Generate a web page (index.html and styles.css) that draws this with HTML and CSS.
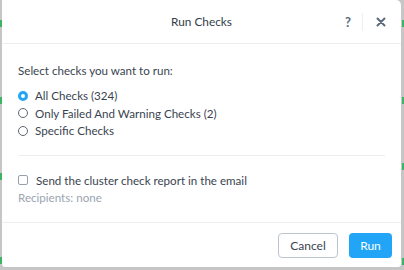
FILE: index.html
```html
<!DOCTYPE html>
<html lang="en">
<head>
    <meta charset="UTF-8">
    <title>Run Checks</title>
    <link rel="stylesheet" href="styles.css">
</head>
<body>
    <div class="modal">
        <div class="modal-header">
            <div class="modal-title">Run Checks</div>
            <div class="header-actions">
                <span class="help">?</span>
                <span class="sep"></span>
                <span class="close">
                    <svg width="10" height="10" viewBox="0 0 10 10"><path d="M1.5 1.5 L8.5 8.5 M8.5 1.5 L1.5 8.5" stroke="#5b6b7c" stroke-width="2" stroke-linecap="round"/></svg>
                </span>
            </div>
        </div>

        <div class="modal-body">
            <p class="intro">Select checks you want to run:</p>
            <div class="options">
                <label class="radio-row"><span class="radio checked"></span>All Checks (324)</label>
                <label class="radio-row"><span class="radio"></span>Only Failed And Warning Checks (2)</label>
                <label class="radio-row"><span class="radio"></span>Specific Checks</label>
            </div>
            <hr class="divider">
            <label class="check-row"><span class="checkbox"></span>Send the cluster check report in the email</label>
            <div class="recipients">Recipients: none</div>
        </div>

        <div class="modal-footer">
            <button class="btn btn-default">Cancel</button>
            <button class="btn btn-primary">Run</button>
        </div>
    </div>
</body>
</html>
```

FILE: styles.css
```css
:root {
    --text: #3a4450;
    --muted: #9aa4b0;
    --line: #eceff2;
    --blue: #22a5f7;
}

body {
    margin: 0;
    width: 404px;
    height: 270px;
    overflow: hidden;
    font-family: 'Lato', 'Open Sans', sans-serif;
    color: var(--text);
    background-color: #c6c6c6;
    background-image:
        linear-gradient(#3cb464, #3cb464),
        linear-gradient(#3cb464, #3cb464),
        linear-gradient(#3cb464, #3cb464),
        linear-gradient(#3cb464, #3cb464),
        linear-gradient(#3cb464, #3cb464),
        linear-gradient(#3cb464, #3cb464),
        linear-gradient(#3cb464, #3cb464),
        linear-gradient(#3cb464, #3cb464);
    background-size: 2px 7px;
    background-repeat: no-repeat;
    background-position:
        0 20px, 0 97px, 0 173px, 0 257px,
        402px 20px, 402px 97px, 402px 163px, 402px 258px;
}

.modal {
    margin: 0 3px 0 2px;
    width: 399px;
    height: 267px;
    background: white;
    border-radius: 0 5px 3px 3px;
    display: flex;
    flex-direction: column;
}

.modal-header {
    height: 44px;
    border-bottom: 1px solid var(--line);
    display: flex;
    align-items: center;
    justify-content: center;
    position: relative;
    box-sizing: border-box;
}

.modal-title {
    font-size: 11.8px;
    color: #333d48;
}

.header-actions {
    position: absolute;
    right: 0;
    top: 0;
    height: 44px;
    display: flex;
    align-items: center;
}

.help {
    font-weight: 700;
    font-size: 13px;
    color: #5b6b7c;
    width: 14px;
    text-align: center;
    margin-right: 7px;
}

.sep {
    width: 1px;
    height: 18px;
    background: var(--line);
}

.close {
    width: 36px;
    display: flex;
    justify-content: center;
    margin-right: 2px;
}

.modal-body {
    flex: 1;
    padding: 18px 16px 0 16px;
    font-size: 11.6px;
}

.intro {
    margin: 0 0 8px 0;
    line-height: 17px;
}

.radio-row,
.check-row {
    display: flex;
    align-items: center;
    height: 17.5px;
}

.radio {
    width: 8px;
    height: 8px;
    border: 1px solid #5d6772;
    border-radius: 50%;
    margin-right: 7px;
}

.radio.checked {
    width: 4px;
    height: 4px;
    border: 3px solid var(--blue);
}

.divider {
    border: none;
    border-top: 1px solid var(--line);
    margin: 15px 0 16px 0;
}

.checkbox {
    width: 8px;
    height: 8px;
    border: 1px solid #98a2ad;
    border-radius: 2px;
    margin-right: 8px;
}

.recipients {
    color: var(--muted);
    line-height: 17px;
}

.modal-footer {
    height: 45px;
    border-top: 1px solid var(--line);
    display: flex;
    justify-content: flex-end;
    align-items: flex-start;
    gap: 11px;
    padding: 10px 9px 0 0;
    box-sizing: border-box;
}

.btn {
    height: 25px;
    border-radius: 4px;
    font-family: inherit;
    font-size: 12px;
    padding: 0;
}

.btn-default {
    width: 60px;
    background: white;
    border: 1px solid #bcc4cd;
    color: var(--text);
}

.btn-primary {
    width: 43px;
    background: var(--blue);
    border: none;
    color: white;
}
```
